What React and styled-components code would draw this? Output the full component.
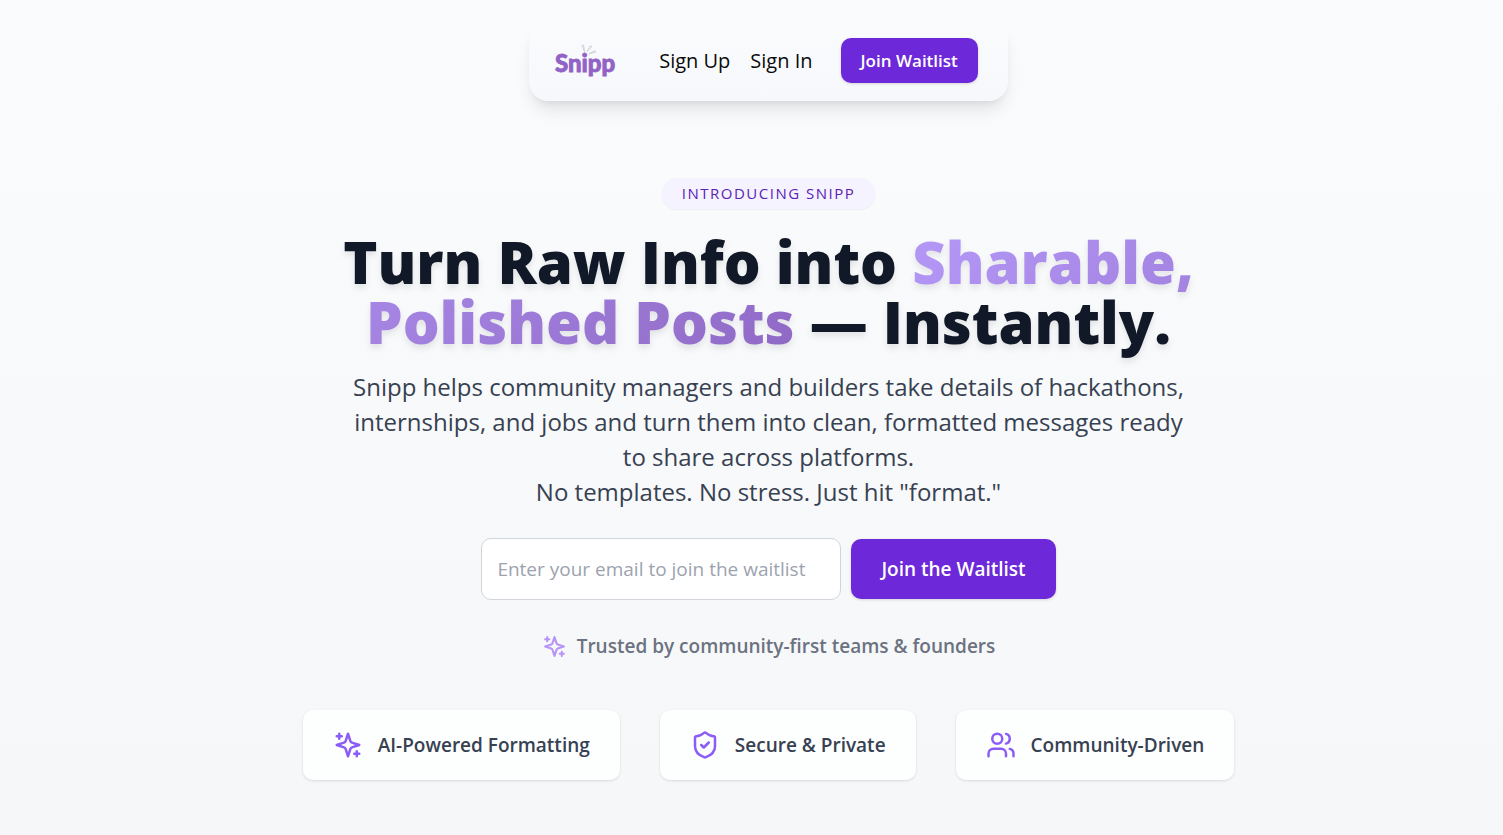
import styled, { createGlobalStyle } from 'styled-components';
import { ShieldCheck, Users } from 'lucide-react';

const GlobalStyle = createGlobalStyle`
  * {
    box-sizing: border-box;
  }
  body {
    margin: 0;
    font-family: 'Open Sans', 'Noto Sans', sans-serif;
    color: #000;
  }
  h1,
  p,
  ul {
    margin: 0;
    padding: 0;
  }
  button,
  input {
    font-family: inherit;
  }
`;

const Page = styled.div`
  min-height: 100vh;
  padding: 20px 0 55px 34px;
  display: flex;
  flex-direction: column;
  align-items: center;
  background: linear-gradient(to bottom, #fafbfd, #f6f7f9);
`;

const Nav = styled.nav`
  display: flex;
  align-items: center;
  padding: 18px 30px 18px 24px;
  border-radius: 20px;
  background: linear-gradient(to bottom, #fafbfd, #f7f8fb);
  box-shadow: 0 12px 18px -4px rgba(0, 0, 0, 0.1), 0 5px 8px -5px rgba(0, 0, 0, 0.1);
`;

const LogoLink = styled.a`
  display: flex;
  margin-right: 42px;
`;

const NavLinks = styled.div`
  display: flex;
  gap: 20px;
  margin-right: 28px;
`;

const NavLink = styled.a`
  font-size: 20px;
  line-height: 30px;
  color: #0a0a0a;
  text-decoration: none;
`;

const Button = styled.button`
  height: ${({ $large }) => ($large ? '60px' : '45px')};
  padding: 0 ${({ $large }) => ($large ? '30px' : '20px')};
  border: none;
  border-radius: 10px;
  background: #6d28d9;
  color: #fff;
  font-size: ${({ $large }) => ($large ? '19px' : '17px')};
  font-weight: 600;
  white-space: nowrap;
  cursor: pointer;
  box-shadow: 0 1px 3px rgba(0, 0, 0, 0.15);
  &:hover {
    background: #5b21b6;
  }
`;

const Hero = styled.main`
  width: 100%;
  margin-top: 77px;
  display: flex;
  flex-direction: column;
  align-items: center;
  text-align: center;
`;

const Badge = styled.span`
  padding: 5px 20px;
  border-radius: 16px;
  background: #f5f3ff;
  color: #5b21b6;
  font-size: 15px;
  font-weight: 500;
  line-height: 21px;
  letter-spacing: 0.1em;
  text-transform: uppercase;
  box-shadow: 0 1px 2px rgba(0, 0, 0, 0.06);
`;

const Title = styled.h1`
  max-width: 960px;
  margin-top: 23px;
  font-size: 58px;
  font-weight: 800;
  line-height: 60px;
  color: #111827;
  filter: drop-shadow(0 4px 3px rgba(0, 0, 0, 0.09));
`;

const Gradient = styled.span`
  color: transparent;
  background: linear-gradient(135deg, #b498f8, #8f68c4);
  background-clip: text;
  -webkit-background-clip: text;
`;

const Description = styled.p`
  max-width: 840px;
  margin-top: 17px;
  font-size: 24px;
  line-height: 35px;
  color: #374151;
`;

const WaitlistForm = styled.form`
  display: flex;
  align-items: center;
  gap: 10px;
  margin-top: 29px;
`;

const EmailInput = styled.input`
  width: 360px;
  height: 62px;
  padding: 0 15px;
  border: 1px solid #d1d5db;
  border-radius: 10px;
  background: #fff;
  font-size: 19px;
  color: #111827;
  &::placeholder {
    color: #9ca3af;
  }
`;

const Trusted = styled.p`
  display: flex;
  align-items: center;
  gap: 10px;
  margin-top: 31px;
  font-size: 19px;
  font-weight: 600;
  line-height: 30px;
  color: #6b7280;
  svg {
    color: #b794f6;
  }
`;

const Features = styled.ul`
  display: flex;
  flex-wrap: wrap;
  justify-content: center;
  gap: 40px;
  margin-top: 49px;
  list-style: none;
`;

const Feature = styled.li`
  display: flex;
  align-items: center;
  gap: 15px;
  padding: 20px 30px;
  border-radius: 10px;
  background: #fdfefe;
  font-size: 19px;
  font-weight: 600;
  line-height: 30px;
  color: #374151;
  box-shadow: 0 1px 3px rgba(0, 0, 0, 0.12);
  svg {
    color: #8b5cf6;
  }
`;

const LogoText = styled.text`
  font-family: Lato, sans-serif;
  font-size: 24px;
  font-weight: 900;
  fill: #9163c6;
  stroke: #9163c6;
  stroke-width: 0.8;
`;

const Logo = () => (
  <svg width='64' height='40' viewBox='0 0 64 40' role='img' aria-label='Snipp'>
    <LogoText x='2' y='31'>
      Snipp
    </LogoText>
    <g fill='none' stroke='#b9bbbf' strokeWidth='0.6' strokeLinejoin='round'>
      <path d='M31.500 10.500 28.800 4.500l1.800-.4Z' />
      <path d='M34 10.500 37.200 4.600l1.800 1.100Z' />
      <path d='M36 12.800 42 9.600l.5 1.600Z' />
    </g>
  </svg>
);

const Sparkles = ({ size }) => (
  <svg
    width={size}
    height={size}
    viewBox='0 0 24 24'
    fill='none'
    stroke='currentColor'
    strokeWidth='2'
    strokeLinecap='round'
    strokeLinejoin='round'
    aria-hidden='true'
  >
    <path d='m12 3-1.912 5.813a2 2 0 0 1-1.275 1.275L3 12l5.813 1.912a2 2 0 0 1 1.275 1.275L12 21l1.912-5.813a2 2 0 0 1 1.275-1.275L21 12l-5.813-1.912a2 2 0 0 1-1.275-1.275L12 3Z' />
    <path d='M5 3v4M19 17v4M3 5h4M17 19h4' />
  </svg>
);

const features = [
  { icon: Sparkles, label: 'AI-Powered Formatting' },
  { icon: ShieldCheck, label: 'Secure & Private' },
  { icon: Users, label: 'Community-Driven' },
];

const App = () => {
  return (
    <>
      <GlobalStyle />
      <Page>
        <Nav>
          <LogoLink href='#'>
            <Logo />
          </LogoLink>
          <NavLinks>
            <NavLink href='#signup'>Sign Up</NavLink>
            <NavLink href='#signin'>Sign In</NavLink>
          </NavLinks>
          <Button type='button'>Join Waitlist</Button>
        </Nav>

        <Hero>
          <Badge>Introducing Snipp</Badge>
          <Title>
            Turn Raw Info into{' '}
            <Gradient>
              Sharable,
              <br />
              Polished Posts
            </Gradient>{' '}
            — Instantly.
          </Title>
          <Description>
            Snipp helps community managers and builders take details of hackathons, internships, and jobs and turn them into clean, formatted
            messages ready to share across platforms.
            <br />
            No templates. No stress. Just hit "format."
          </Description>

          <WaitlistForm onSubmit={(e) => e.preventDefault()}>
            <EmailInput type='email' name='email' aria-label='Email' placeholder='Enter your email to join the waitlist' />
            <Button type='submit' $large>
              Join the Waitlist
            </Button>
          </WaitlistForm>

          <Trusted>
            <Sparkles size={25} />
            Trusted by community-first teams &amp; founders
          </Trusted>

          <Features>
            {features.map(({ icon: Icon, label }) => (
              <Feature key={label}>
                <Icon size={30} />
                {label}
              </Feature>
            ))}
          </Features>
        </Hero>
      </Page>
    </>
  );
};

export default App;
